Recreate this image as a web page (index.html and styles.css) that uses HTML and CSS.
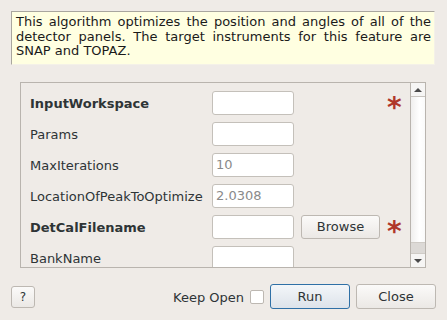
FILE: index.html
```html
<!DOCTYPE html>
<html>
<head>
<meta charset="utf-8">
<link rel="stylesheet" href="styles.css">
</head>
<body>
<div class="dialog">
  <div class="desc">This algorithm optimizes the position and angles of all of the detector panels. The target instruments for this feature are SNAP and TOPAZ.</div>
  <div class="scrollarea">
    <div class="props">
      <div class="lbl bold">InputWorkspace</div><div class="inp"></div><div></div><div class="star">*</div>
      <div class="lbl">Params</div><div class="inp"></div><div></div><div></div>
      <div class="lbl">MaxIterations</div><div class="inp ph">10</div><div></div><div></div>
      <div class="lbl">LocationOfPeakToOptimize</div><div class="inp ph">2.0308</div><div></div><div></div>
      <div class="lbl bold">DetCalFilename</div><div class="inp"></div><div class="btn browse">Browse</div><div class="star">*</div>
      <div class="lbl">BankName</div><div class="inp"></div><div></div><div></div>
    </div>
    <div class="vscroll">
      <div class="sbtn"><span class="tri up"></span></div>
      <div class="handle"></div>
      <div class="track"></div>
      <div class="sbtn"><span class="tri down"></span></div>
    </div>
  </div>
  <div class="footer">
    <div class="btn help">?</div>
    <div class="spacer"></div>
    <div class="keep">Keep Open</div>
    <div class="check"></div>
    <div class="btn run">Run</div>
    <div class="btn close">Close</div>
  </div>
</div>
</body>
</html>
```
FILE: styles.css
```css
html, body {
  margin: 0;
  padding: 0;
  background: #efebe7;
  font-family: "DejaVu Sans", sans-serif;
  font-size: 13px;
  color: #2e3436;
}
.dialog {
  width: 447px;
  height: 320px;
  display: flex;
  flex-direction: column;
  overflow: hidden;
}
.desc {
  margin: 11px 12px 0 11px;
  height: 54px;
  box-sizing: border-box;
  background: #ffffe1;
  border: 1px solid #f4f1e8;
  border-top-color: #a9a69f;
  border-left-color: #a9a69f;
  padding: 3px 3px 0 4px;
  line-height: 14.5px;
  text-align: justify;
  color: #1a1a1a;
}
.scrollarea {
  margin: 17px 21px 0 20px;
  height: 186px;
  box-sizing: border-box;
  border: 1px solid #b9b4ae;
  display: flex;
  overflow: hidden;
}
.props {
  flex: 1;
  display: grid;
  grid-template-columns: 175px 82px 79px 22px;
  grid-auto-rows: 24px;
  row-gap: 7px;
  column-gap: 7px;
  padding: 8px 0 0 9px;
  align-items: center;
}
.lbl {
  white-space: nowrap;
  color: #2e3436;
}
.bold { font-weight: bold; }
.inp {
  height: 24px;
  box-sizing: border-box;
  background: #fff;
  border: 1px solid #c4c0ba;
  border-radius: 3px;
  padding: 0 0 0 3px;
  line-height: 22px;
}
.ph { color: #8a8a8a; }
.star {
  color: #b0372a;
  font-size: 28px;
  font-weight: bold;
  line-height: 24px;
  height: 24px;
  padding-top: 5px;
  box-sizing: border-box;
  margin-left: 0px;
}
.btn {
  box-sizing: border-box;
  border: 1px solid #bdb8b2;
  border-radius: 3px;
  background: linear-gradient(#fbfaf9, #ebe8e5);
  text-align: center;
  color: #2e3436;
}
.browse {
  height: 24px;
  line-height: 22px;
}
.vscroll {
  width: 14px;
  border-left: 1px solid #b9b4ae;
  display: flex;
  flex-direction: column;
}
.sbtn {
  height: 13px;
  background: #f6f5f4;
  display: flex;
  align-items: center;
  justify-content: center;
  flex: none;
}
.sbtn:first-child { border-bottom: 1px solid #c8c4bf; }
.tri {
  width: 0;
  height: 0;
  border-left: 4px solid transparent;
  border-right: 4px solid transparent;
}
.tri.up { border-bottom: 4px solid #4a4a4a; }
.tri.down { border-top: 4px solid #4a4a4a; }
.handle {
  flex: 1;
  background: linear-gradient(90deg, #f0efee, #ffffff 60%, #fafafa);
}
.track {
  height: 10px;
  background: #dcd9d6;
  border-top: 1px solid #cfcbc6;
  border-bottom: 1px solid #cfcbc6;
  flex: none;
}
.footer {
  margin-top: 16px;
  height: 25px;
  display: flex;
  align-items: center;
  padding: 0 11px 0 11px;
}
.help {
  width: 24px;
  height: 22px;
  line-height: 20px;
  font-size: 12px;
}
.spacer { flex: 1; }
.keep {
  margin-right: 6px;
  margin-top: 1px;
}
.check {
  width: 14px;
  height: 14px;
  box-sizing: border-box;
  background: #fff;
  border: 1px solid #bdb8b2;
  border-radius: 2px;
  margin-right: 6px;
}
.run, .close {
  width: 80px;
  height: 25px;
  line-height: 23px;
}
.run {
  border-color: #2f70a6;
  background: linear-gradient(#f3f6f9, #dde3ea);
  margin-right: 6px;
}
```
